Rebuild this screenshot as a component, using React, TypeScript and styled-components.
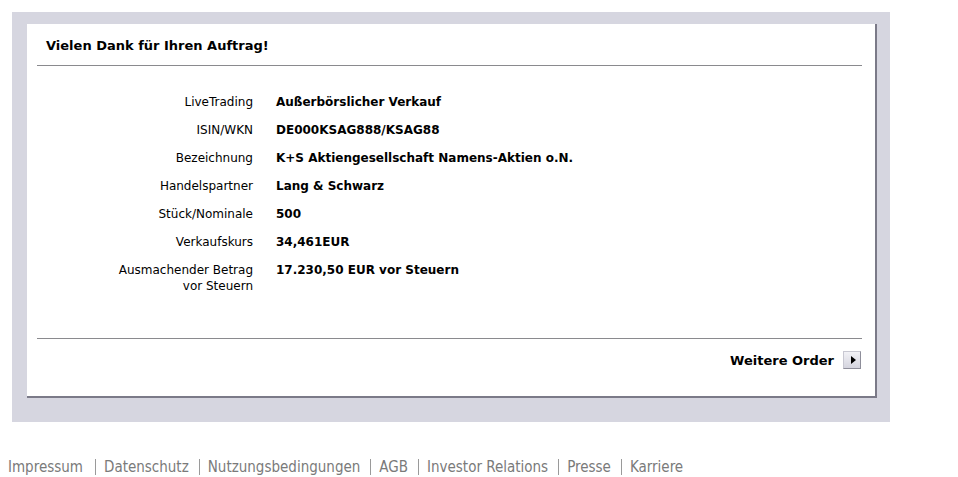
import React from "react";
import styled, { createGlobalStyle } from "styled-components";

const GlobalStyle = createGlobalStyle`
  html, body {
    margin: 0;
    padding: 0;
    background: #ffffff;
  }
  body {
    font-family: Verdana, "DejaVu Sans", sans-serif;
    color: #000000;
  }
`;

const Page = styled.div`
  width: 958px;
`;

const Frame = styled.div`
  margin: 12px 0 0 12px;
  width: 878px;
  height: 410px;
  box-sizing: border-box;
  background: #d6d6e0;
  padding: 12px 13px 0 15px;
`;

const Card = styled.div`
  width: 850px;
  height: 374px;
  box-sizing: border-box;
  background: #ffffff;
  border-right: 2px solid #7b7a88;
  border-bottom: 2px solid #7b7a88;
  padding: 0 13px 0 10px;
  display: flex;
  flex-direction: column;
`;

const Header = styled.div`
  height: 42px;
  box-sizing: border-box;
  padding: 14px 0 0 9px;
  border-bottom: 1px solid #8a8a8e;
`;

const Title = styled.h1`
  margin: 0;
  font-size: 13px;
  line-height: 16px;
  font-weight: bold;
`;

const Details = styled.dl`
  margin: 0;
  padding: 28px 0 0 0;
  height: 273px;
  box-sizing: border-box;
  display: grid;
  grid-template-columns: 216px 1fr;
  column-gap: 23px;
  row-gap: 12px;
  align-content: start;
  border-bottom: 1px solid #8a8a8e;
`;

const Label = styled.dt`
  margin: 0;
  text-align: right;
  font-size: 12px;
  line-height: 16px;
`;

const Value = styled.dd`
  margin: 0;
  font-size: 12px;
  line-height: 16px;
  font-weight: bold;
`;

const Actions = styled.div`
  display: flex;
  justify-content: flex-end;
  align-items: center;
  gap: 9px;
  padding: 12px 1px 0 0;
`;

const ActionText = styled.span`
  font-size: 13px;
  font-weight: bold;
`;

const ArrowButton = styled.button`
  width: 18px;
  height: 18px;
  padding: 0;
  box-sizing: border-box;
  display: flex;
  align-items: center;
  justify-content: center;
  background: linear-gradient(#f2f2f6, #d4d4de);
  border: 1px solid;
  border-color: #c8c8d2 #8e8e9a #8e8e9a #c8c8d2;
  cursor: pointer;

  &::after {
    content: "";
    width: 0;
    height: 0;
    margin-left: 2px;
    border-top: 4px solid transparent;
    border-bottom: 4px solid transparent;
    border-left: 5px solid #000000;
  }
`;

const Footer = styled.nav`
  display: flex;
  align-items: center;
  padding: 37px 0 0 8px;
  font-family: Tahoma, "DejaVu Sans Condensed", sans-serif;
  font-size: 15px;
  line-height: 16px;
  color: #7a7a7a;
`;

const FooterLink = styled.a<{ first?: boolean }>`
  color: inherit;
  text-decoration: none;
  padding: ${p => (p.first ? "0 12px 0 0" : "0 10px 0 8px")};
  border-left: ${p => (p.first ? "none" : "1px solid #9a9a9a")};
`;

const rows: [string, string][] = [
  ["LiveTrading", "Außerbörslicher Verkauf"],
  ["ISIN/WKN", "DE000KSAG888/KSAG88"],
  ["Bezeichnung", "K+S Aktiengesellschaft Namens-Aktien o.N."],
  ["Handelspartner", "Lang & Schwarz"],
  ["Stück/Nominale", "500"],
  ["Verkaufskurs", "34,461EUR"],
  ["Ausmachender Betrag\nvor Steuern", "17.230,50 EUR vor Steuern"],
];

const links = [
  "Impressum",
  "Datenschutz",
  "Nutzungsbedingungen",
  "AGB",
  "Investor Relations",
  "Presse",
  "Karriere",
];

export default function App() {
  return (
    <Page>
      <GlobalStyle />
      <Frame>
        <Card>
          <Header>
            <Title>Vielen Dank für Ihren Auftrag!</Title>
          </Header>
          <Details>
            {rows.map(([label, value]) => (
              <React.Fragment key={label}>
                <Label>
                  {label.split("\n").map((line, i) => (
                    <div key={i}>{line}</div>
                  ))}
                </Label>
                <Value>{value}</Value>
              </React.Fragment>
            ))}
          </Details>
          <Actions>
            <ActionText>Weitere Order</ActionText>
            <ArrowButton aria-label="Weitere Order" />
          </Actions>
        </Card>
      </Frame>
      <Footer>
        {links.map((l, i) => (
          <FooterLink key={l} href="#" first={i === 0}>
            {l}
          </FooterLink>
        ))}
      </Footer>
    </Page>
  );
}
